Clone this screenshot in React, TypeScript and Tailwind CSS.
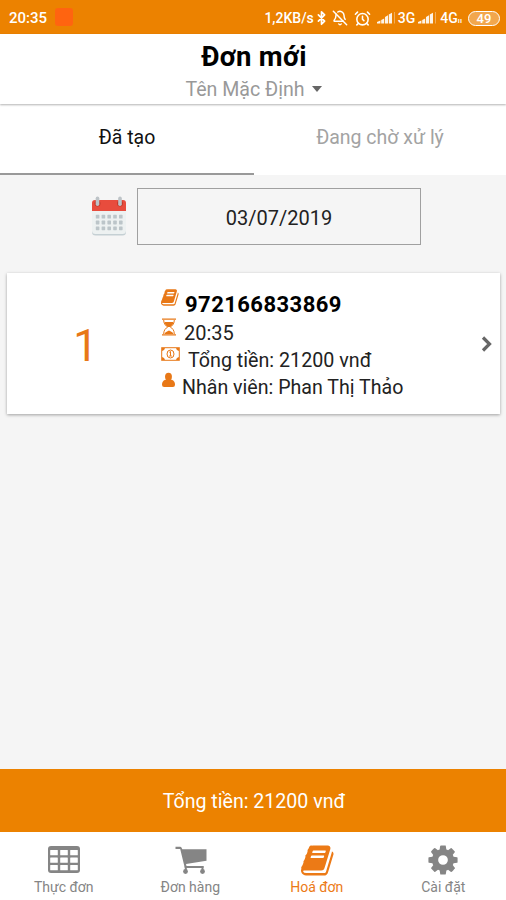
import { ReactNode } from "react";
import { AlarmClock, BellOff, Bluetooth } from "lucide-react";

function BookIcon({ className }: { className: string }) {
    return (
        <svg viewBox="0 0 1792 1792" fill="currentColor" className={className}>
            <path d="M1639 478q40 57 18 129l-275 906q-19 64-76.5 107.5t-122.5 43.5h-923q-77 0-148.5-53.5t-99.5-131.5q-24-67-2-127 0-4 3-27t4-37q1-8-3-21.5t-3-19.5q2-11 8-21t16.5-23.5 16.5-23.5q23-38 45-91.5t30-91.5q3-10 .5-30t-.5-28q3-11 17-28t17-23q21-36 42-92t25-90q1-9-2.5-32t.5-28q4-13 22-30.5t22-22.5q19-26 42.5-84.5t27.5-96.5q1-8-3-25.5t-2-26.5q2-8 9-18t18-23 17-21q8-12 16.5-30.5t15-35 16-36 19.5-32 26.5-23.5 36-11.5 47.5 5.5l-1 3q38-9 51-9h761q74 0 114 56t18 130l-274 906q-36 119-71.5 153.5t-128.5 34.5h-869q-27 0-38 15-11 16-1 43 24 70 144 70h923q29 0 56-15.5t35-41.5l300-987q7-22 5-57 38 15 59 43zm-1064 2q-4 13 2 22.5t20 9.5h608q13 0 25.5-9.5t16.5-22.5l21-64q4-13-2-22.5t-20-9.5h-608q-13 0-25.5 9.5t-16.5 22.5zm-83 256q-4 13 2 22.5t20 9.5h608q13 0 25.5-9.5t16.5-22.5l21-64q4-13-2-22.5t-20-9.5h-608q-13 0-25.5 9.5t-16.5 22.5z" />
        </svg>
    );
}

function CogIcon() {
    return (
        <svg viewBox="0 0 1792 1792" fill="currentColor" className="ml-px size-[34px]">
            <path d="M1152 896q0-106-75-181t-181-75-181 75-75 181 75 181 181 75 181-75 75-181zm512-109v222q0 12-8 23t-20 13l-185 28q-19 54-39 91 35 50 107 138 10 12 10 25t-9 23q-27 37-99 108t-94 71q-12 0-26-9l-138-108q-44 23-91 38-16 136-29 186-7 28-36 28h-222q-14 0-24.5-8.5t-11.5-21.5l-28-184q-49-16-90-37l-141 107q-10 9-25 9-14 0-25-11-126-114-165-168-7-10-7-23 0-12 8-23 15-21 51-66.5t54-70.5q-27-50-41-99l-183-27q-13-2-21-12.5t-8-23.5v-222q0-12 8-23t19-13l186-28q14-46 39-92-40-57-107-138-10-12-10-24 0-10 9-23 26-36 98.5-107.5t94.5-71.5q13 0 26 10l138 107q44-23 91-38 16-136 29-186 7-28 36-28h222q14 0 24.5 8.5t11.5 21.5l28 184q49 16 90 37l142-107q9-9 24-9 13 0 25 10 129 119 165 170 7 8 7 22 0 12-8 23-15 21-51 66.5t-54 70.5q26 50 41 98l183 28q13 2 21 12.5t8 23.5z" />
        </svg>
    );
}

function TableIcon() {
    return (
        <svg viewBox="0 0 32 27" className="ml-0.5 -mt-0.5 h-[27px] w-8">
            <rect width="32" height="27" rx="3" fill="currentColor" />
            {[4, 11.5, 19].map((y) =>
                [2.2, 12.2, 22.2].map((x) => (
                    <rect key={`${x}-${y}`} x={x} y={y} width="7.6" height="5.3" rx="0.5" fill="#fff" />
                ))
            )}
        </svg>
    );
}

function CartIcon() {
    return (
        <svg viewBox="0 0 32 28" className="ml-0.5 h-7 w-8" fill="currentColor">
            <path d="M.5 .8h4.500q1.300 0 1.700 1.200l.6 1.300H31.500V14.800L11 18l.5 2H28.500v2H9.800L5.200 3H.5z" />
            <path d="M9.800 20h2v5h-2zM26.500 20h2v5h-2z" />
            <circle cx="10.500" cy="25.500" r="2.400" />
            <circle cx="27.500" cy="25.500" r="2.400" />
        </svg>
    );
}

function HourglassIcon() {
    return (
        <svg viewBox="0 0 16 18" className="h-[18px] w-4">
            <path d="M1 1.2h14M1 16.8h14" stroke="currentColor" strokeWidth="1.3" />
            <path d="M2.7 2c0 4 2 5.7 4 7-2 1.3-4 3-4 7M13.3 2c0 4-2 5.7-4 7 2 1.3 4 3 4 7" stroke="currentColor" strokeWidth="1" fill="none" />
            <path d="M3.500 4h9c0 2-1.500 3.500-3.300 5H6.800C5 7.500 3.500 6 3.500 4zM3.500 16c.5-2 2.500-2.500 4.500-3.500 2 1 4 1.500 4.500 3.500z" fill="currentColor" />
        </svg>
    );
}

function MoneyIcon() {
    return (
        <svg viewBox="0 0 19 14" className="mt-0.5 h-3.5 w-[19px]">
            <rect x=".7" y=".7" width="17.6" height="12.6" fill="none" stroke="currentColor" strokeWidth="1" />
            <path d="M1 1h3Q3.700 3.700 1 4zM18 1h-3q.3 2.700 3 3zM1 13h3Q3.700 10.300 1 10zM18 13h-3q.3-2.700 3-3z" fill="currentColor" />
            <ellipse cx="9.5" cy="7" rx="3.5" ry="4" fill="none" stroke="currentColor" strokeWidth="1" />
            <path d="M8.300 5.300l1.200-.9v4.400M8.200 9h2.600" fill="none" stroke="currentColor" strokeWidth="1" />
        </svg>
    );
}

function UserIcon() {
    return (
        <svg viewBox="0 0 14 16" fill="currentColor" className="mt-px ml-px h-4 w-[13px]">
            <path d="M3.500 7.600C1 8.300 0 10.500 0 13q0 2.600 2.300 2.600h9.400Q14 15.600 14 13c0-2.500-1-4.700-3.500-5.400z" />
            <ellipse cx="7" cy="4.500" rx="3.700" ry="4.200" />
        </svg>
    );
}

function CalendarIcon() {
    return (
        <svg viewBox="0 0 36 41" className="h-[41px] w-9">
            <path d="M1 15h34v21q0 3.500-3.500 3.500h-27Q1 39.500 1 36z" fill="#c5d0d4" />
            <path d="M1 13h34v21.500q0 3.500-3.500 3.500h-27Q1 38 1 34.500z" fill="#edf1f1" />
            <path d="M1 15V7q0-3 3-3h28q3 0 3 3v8z" fill="#e84c3d" />
            {[6.5, 29].map((x) => (
                <g key={x}>
                    <circle cx={x} cy="7.5" r="3" fill="#c03a2b" />
                    <rect x={x - 1.8} y=".5" width="3.6" height="9.5" rx="1.8" fill="#bdc3c7" />
                </g>
            ))}
            {[18.8, 24.6, 30.4].map((y) =>
                [4.8, 10.6, 16.4, 22.2, 28].map((x) => (
                    <rect key={`${x}-${y}`} x={x} y={y} width="3.6" height="3.8" rx=".6" fill="#bcc5c9" />
                ))
            )}
        </svg>
    );
}

function Signal() {
    return (
        <svg viewBox="0 0 19 12" fill="#fff" className="h-3 w-[19px]">
            <path d="M0 11.500V10L3.400 8.500v3zM4.200 11.500V8l3-1.500v5zM8 11.500V5L11 3.300v8.200zM11.800 11.500V2.500L15 .8v10.700z" opacity=".9" />
            <path d="M17 0h1v11.500h-1z" opacity=".35" />
        </svg>
    );
}

function InfoRow({ icon, className, children }: { icon: ReactNode; className: string; children: ReactNode }) {
    return (
        <div className={`flex items-start whitespace-nowrap leading-[27px] text-[#222] ${className}`}>
            <span className="shrink-0 text-[#e87817]">{icon}</span>
            {children}
        </div>
    );
}

function NavItem({ icon, label, active }: { icon: ReactNode; label: string; active?: boolean }) {
    return (
        <div className={`flex flex-1 flex-col items-center ${active ? "text-[#ec7a16]" : "text-[#858585]"}`}>
            <div className="mt-2.5 flex h-9 items-center justify-center">{icon}</div>
            <span className="pl-px text-[14px] leading-[18px]">{label}</span>
        </div>
    );
}

export default function App() {
    return (
        <div className="flex h-[900px] w-[506px] flex-col overflow-hidden bg-[#f5f5f5] font-['Roboto','Noto_Sans',sans-serif]">
            <div className="flex h-[34px] shrink-0 items-center bg-[#ec8200] pl-[9px] pr-[6px] text-[14px] font-medium text-white">
                <span className="mt-0.5 text-[15px]">20:35</span>
                <span className="ml-2 size-[18px] rounded-[3px] bg-[#ff6410]" />
                <div className="ml-auto mt-0.5 flex items-center">
                    <span>1,2KB/s</span>
                    <Bluetooth className="h-4 w-[15px]" strokeWidth={2.7} />
                    <BellOff className="ml-[3px] size-4" strokeWidth={2.2} />
                    <AlarmClock className="ml-1.5 size-[17px]" strokeWidth={2.2} />
                    <span className="ml-1.5"><Signal /></span>
                    <span className="ml-0.5 text-[14px]">3G</span>
                    <span className="ml-[3px]"><Signal /></span>
                    <span className="ml-[3px] text-[14px]">4G</span>
                    <span className="mt-1.5 text-[8px]">ıı</span>
                    <span className="ml-[6px] flex h-[15px] w-8 items-center justify-center rounded-full border-[1.5px] border-white bg-white/30 text-[13px] leading-none">49</span>
                </div>
            </div>

            <header className="z-10 flex h-[70px] shrink-0 flex-col items-center bg-white shadow-[0_1px_2px_rgba(0,0,0,0.3)]">
                <h1 className="mt-[7px] pl-0.5 text-[27.5px] font-bold leading-8 tracking-[0.3px] text-black">Đơn mới</h1>
                <div className="mt-[5px] flex items-center pl-px text-[19.6px] leading-6 text-[#999]">
                    Tên Mặc Định
                    <span className="-mt-0.5 ml-[7px] border-x-[5.5px] border-t-[6px] border-x-transparent border-t-[#666]" />
                </div>
            </header>

            <div className="flex h-[71px] shrink-0 bg-white text-center text-[19.5px] leading-6">
                <div className="w-[254px] border-b-2 border-[#999] pt-[22px] text-[#111]">Đã tạo</div>
                <div className="flex-1 pt-[22px] text-[#a3a3a3]">Đang chờ xử lý</div>
            </div>

            <div className="mt-[13px] flex h-[57px] shrink-0 items-center pl-[91px]">
                <CalendarIcon />
                <div className="ml-[10px] flex h-[57px] w-[284px] items-center justify-center border border-[#a0a0a0] pt-0.5 text-[20px] text-[#222]">
                    03/07/2019
                </div>
            </div>

            <div className="ml-[7px] mr-1.5 mt-7 flex h-[141px] shrink-0 items-center bg-white shadow-[0_1px_3px_rgba(0,0,0,0.35)]">
                <div className="w-[154px] pl-[3px] pt-[7px] text-center text-[43.5px] leading-none text-[#e87817]">1</div>
                <div className="flex-1">
                    <InfoRow icon={<BookIcon className="-mt-px size-[19px]" />} className="h-[29px] text-[22px]">
                        <b className="ml-[5px] mt-[2px] font-bold tracking-[0.45px] text-black">972166833869</b>
                    </InfoRow>
                    <InfoRow icon={<HourglassIcon />} className="h-[27px] text-[20px]">
                        <span className="ml-[7px] mt-0.5">20:35</span>
                    </InfoRow>
                    <InfoRow icon={<MoneyIcon />} className="h-[26px] text-[19.7px]">
                        <span className="ml-[8px] mt-0.5">Tổng tiền: 21200 vnđ</span>
                    </InfoRow>
                    <InfoRow icon={<UserIcon />} className="h-[28px] text-[19.6px]">
                        <span className="ml-[7px] mt-[3px]">Nhân viên: Phan Thị Thảo</span>
                    </InfoRow>
                </div>
                <svg viewBox="0 0 12 16" className="mr-[7px] h-4 w-3" fill="none" stroke="#666" strokeWidth="3.2">
                    <path d="m2 1.500 6.500 6.500L2 14.500" />
                </svg>
            </div>

            <div className="mt-auto flex h-[63px] shrink-0 items-center justify-center bg-[#ec8200] pl-0.5 pt-0.5 text-[19.6px] text-white">
                Tổng tiền: 21200 vnđ
            </div>
            <nav className="flex h-[68px] shrink-0 bg-white">
                <NavItem icon={<TableIcon />} label="Thực đơn" />
                <NavItem icon={<CartIcon />} label="Đơn hàng" />
                <NavItem icon={<BookIcon className="ml-1 size-[35px]" />} label="Hoá đơn" active />
                <NavItem icon={<CogIcon />} label="Cài đặt" />
            </nav>
        </div>
    );
}
